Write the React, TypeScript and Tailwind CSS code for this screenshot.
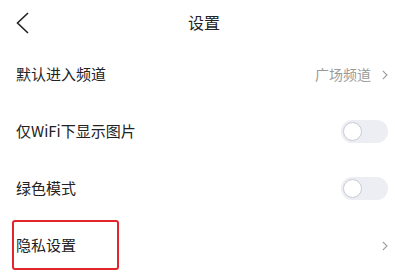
import React from "react";

const font = { fontFamily: '"Noto Sans CJK SC", "Noto Sans", sans-serif' };

function Chevron({ className }: { className?: string }) {
  return (
    <svg className={className} viewBox="0 0 6 10" fill="none" stroke="currentColor" strokeWidth="1.1">
      <path d="M0.8 0.8 L5 5 L0.8 9.2" />
    </svg>
  );
}

function Toggle() {
  return (
    <div className="flex h-[23px] w-[47px] items-center rounded-full bg-[#eceef3] pl-[2px]">
      <div className="h-[19px] w-[19px] rounded-full border-[1.5px] border-[#c9ccd3] bg-white" />
    </div>
  );
}

type Row = { label: string; right?: "toggle" | "chevron"; value?: string; mark?: boolean };

const rows: Row[] = [
  { label: "默认进入频道", right: "chevron", value: "广场频道" },
  { label: "仅WiFi下显示图片", right: "toggle" },
  { label: "绿色模式", right: "toggle" },
  { label: "隐私设置", right: "chevron", mark: true },
];

export default function App() {
  return (
    <div className="h-[278px] w-[395px] overflow-hidden bg-white text-[#222]" style={font}>
      <div className="relative flex h-[46px] items-center">
        <svg className="ml-[16px] h-[22px] w-[13px]" viewBox="0 0 13 22" fill="none" stroke="#222" strokeWidth="1.6">
          <path d="M12 1 L1.5 11 L12 21" />
        </svg>
        <div className="absolute left-[188px] top-[11px] text-[16px] leading-[22px]">设置</div>
      </div>
      {rows.map((r) => (
        <div key={r.label} className="relative flex h-[57px] items-center justify-between pl-[16px] pr-[7px]">
          <span className="text-[15px]">{r.label}</span>
          {r.right === "toggle" ? (
            <Toggle />
          ) : (
            <div className="flex items-center gap-[11px] text-[#9a9a9a]">
              {r.value && <span className="text-[14px]">{r.value}</span>}
              <Chevron className="h-[10px] w-[6px]" />
            </div>
          )}
          {r.mark && (
            <div className="absolute left-[12px] top-[3px] h-[50px] w-[107px] rounded-[3px] border-2 border-[#e3262b]" />
          )}
        </div>
      ))}
    </div>
  );
}
